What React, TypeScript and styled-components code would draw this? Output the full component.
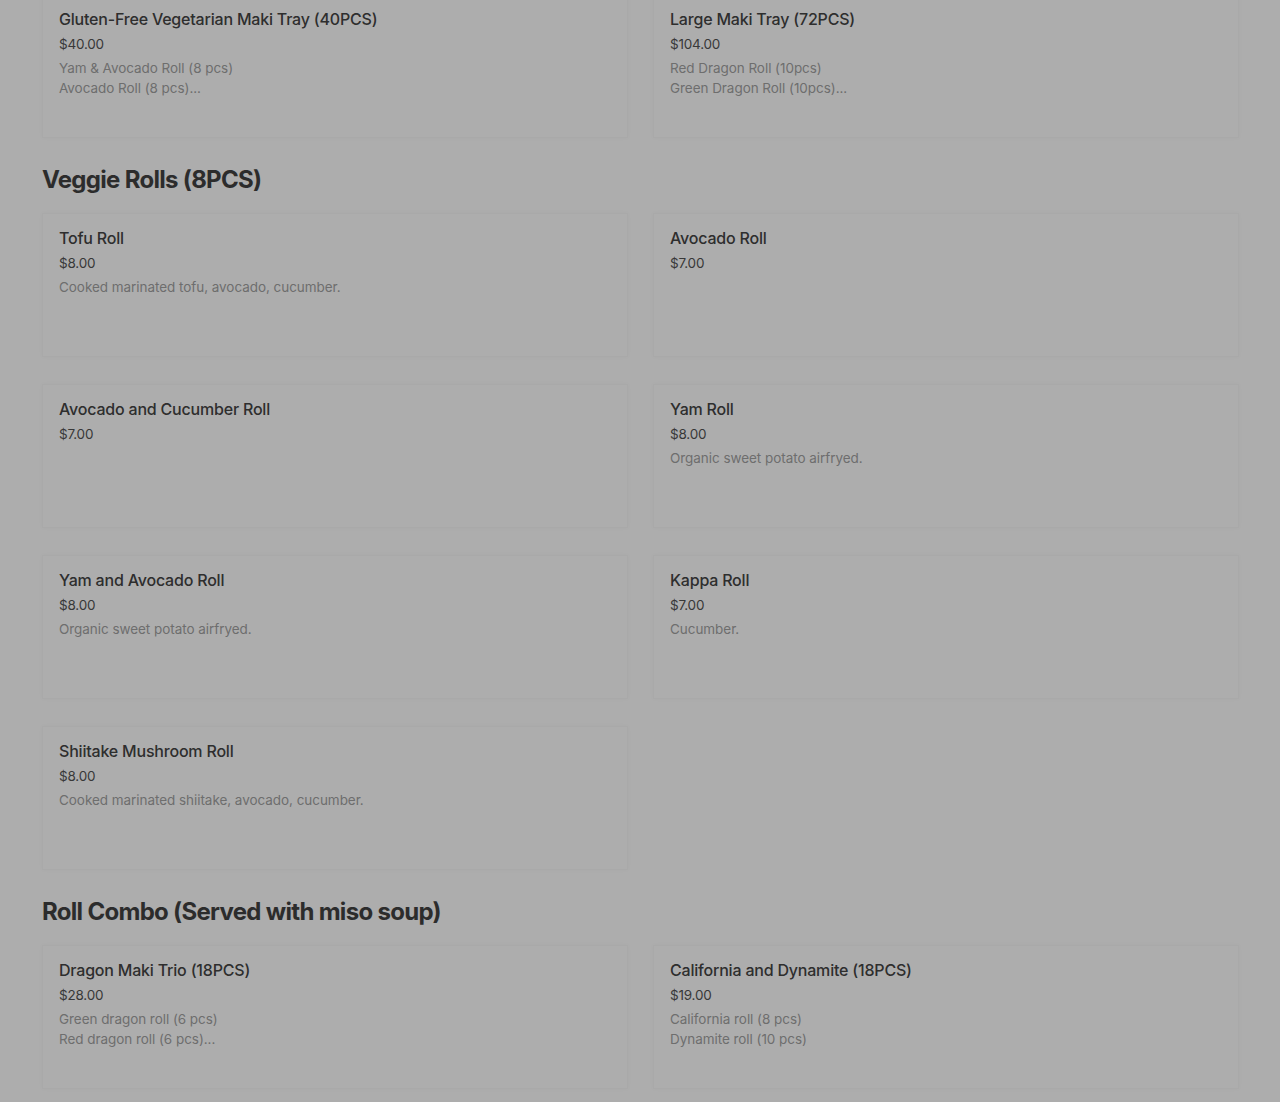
import React from "react";
import styled, { createGlobalStyle } from "styled-components";

const Global = createGlobalStyle`
  html, body { margin: 0; padding: 0; background: #adadad; }
  body { font-family: Inter, "Noto Sans", Arial, sans-serif; -webkit-font-smoothing: antialiased; }
  * { box-sizing: border-box; }
`;

const Page = styled.div`
  width: 1280px;
  height: 1102px;
  overflow: hidden;
  background: #adadad;
  padding: 0 41px 0 42px;
`;

const Content = styled.div`
  margin-top: -6px;
  display: flex;
  flex-direction: column;
`;

const Section = styled.section`
  display: flex;
  flex-direction: column;
`;

const Heading = styled.h2`
  margin: 26px 0 17px;
  font-family: Inter, "Noto Sans", sans-serif;
  font-size: 24px;
  line-height: 32px;
  font-weight: 700;
  letter-spacing: -0.7px;
  color: #2c2c2c;
`;

const Grid = styled.div`
  display: grid;
  grid-template-columns: 1fr 1fr;
  column-gap: 25px;
  row-gap: 27px;
`;

const Card = styled.div`
  min-height: 144px;
  padding: 14px 16px 16px;
  background: #adadad;
  border: 1px solid rgba(0, 0, 0, 0.018);
  box-shadow: 0 0 5px rgba(0, 0, 0, 0.025);
  display: flex;
  flex-direction: column;
`;

const Title = styled.div`
  font-size: 16px;
  line-height: 20px;
  font-weight: 500;
  letter-spacing: -0.2px;
  color: #2e2e2e;
`;

const Price = styled.div`
  margin-top: 5px;
  font-size: 13.5px;
  line-height: 20px;
  color: #383838;
  letter-spacing: -0.2px;
`;

const Desc = styled.div`
  margin-top: 4px;
  font-size: 13.5px;
  line-height: 20px;
  color: #6e6e6e;
  letter-spacing: -0.05px;
  white-space: pre-line;
`;

type Item = { title: string; price: string; desc?: string };

const top: Item[] = [
  { title: "Gluten-Free Vegetarian Maki Tray (40PCS)", price: "$40.00", desc: "Yam & Avocado Roll (8 pcs)\nAvocado Roll (8 pcs)..." },
  { title: "Large Maki Tray (72PCS)", price: "$104.00", desc: "Red Dragon Roll (10pcs)\nGreen Dragon Roll (10pcs)..." },
];

const veggie: Item[] = [
  { title: "Tofu Roll", price: "$8.00", desc: "Cooked marinated tofu, avocado, cucumber." },
  { title: "Avocado Roll", price: "$7.00" },
  { title: "Avocado and Cucumber Roll", price: "$7.00" },
  { title: "Yam Roll", price: "$8.00", desc: "Organic sweet potato airfryed." },
  { title: "Yam and Avocado Roll", price: "$8.00", desc: "Organic sweet potato airfryed." },
  { title: "Kappa Roll", price: "$7.00", desc: "Cucumber." },
  { title: "Shiitake Mushroom Roll", price: "$8.00", desc: "Cooked marinated shiitake, avocado, cucumber." },
];

const combo: Item[] = [
  { title: "Dragon Maki Trio (18PCS)", price: "$28.00", desc: "Green dragon roll (6 pcs)\nRed dragon roll (6 pcs)..." },
  { title: "California and Dynamite (18PCS)", price: "$19.00", desc: "California roll (8 pcs)\nDynamite roll (10 pcs)" },
];

const Cards = ({ items }: { items: Item[] }) => (
  <Grid>
    {items.map((it) => (
      <Card key={it.title}>
        <Title>{it.title}</Title>
        <Price>{it.price}</Price>
        {it.desc && <Desc>{it.desc}</Desc>}
      </Card>
    ))}
  </Grid>
);

export default function App() {
  return (
    <Page>
      <Global />
      <Content>
        <Cards items={top} />
        <Section>
          <Heading>Veggie Rolls (8PCS)</Heading>
          <Cards items={veggie} />
        </Section>
        <Section>
          <Heading>Roll Combo (Served with miso soup)</Heading>
          <Cards items={combo} />
        </Section>
      </Content>
    </Page>
  );
}
